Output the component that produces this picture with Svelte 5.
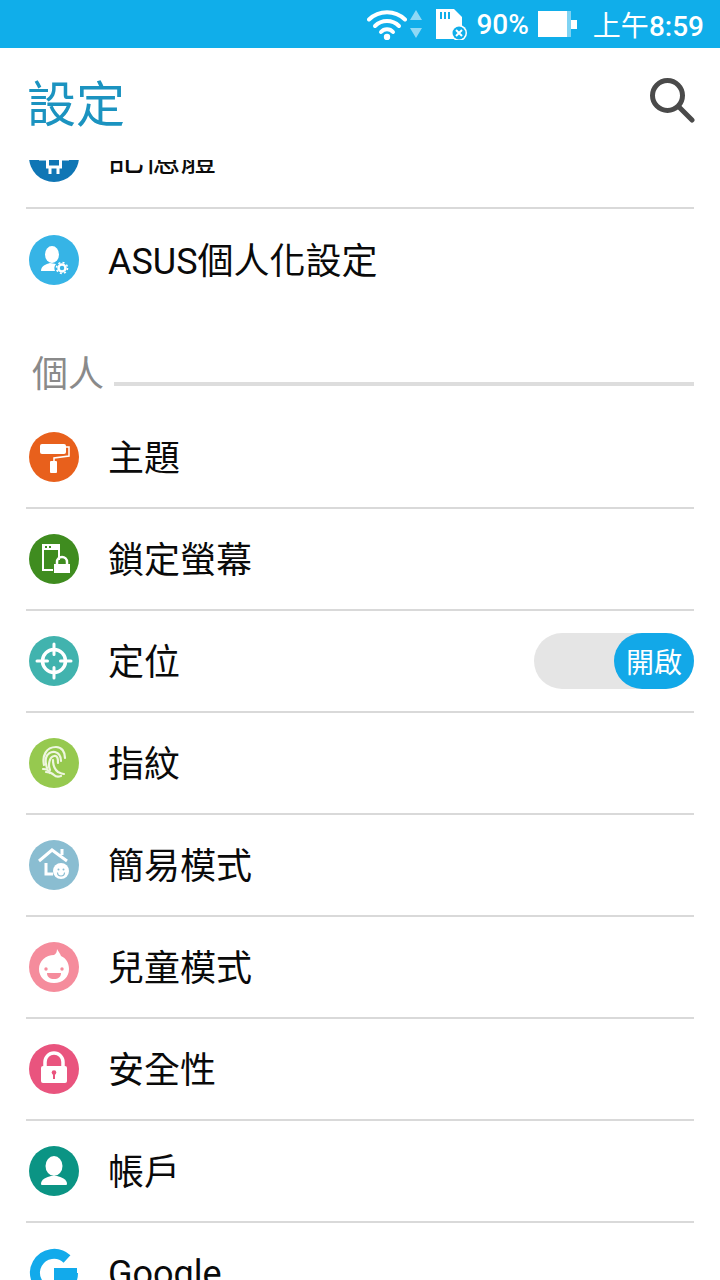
<script>
	const before = [
		{ id: 'storage', color: '#0f76b5', label: '記憶體' },
		{ id: 'asus', color: '#36b4e6', label: 'ASUS個人化設定', last: true }
	];
	const personal = [
		{ id: 'theme', color: '#e8601c', label: '主題' },
		{ id: 'lock', color: '#3f8c1f', label: '鎖定螢幕' },
		{ id: 'location', color: '#41b3ae', label: '定位', toggle: true },
		{ id: 'finger', color: '#96c94f', label: '指紋' },
		{ id: 'easy', color: '#8abdd1', label: '簡易模式' },
		{ id: 'kids', color: '#f58c9c', label: '兒童模式' },
		{ id: 'security', color: '#e9547e', label: '安全性' },
		{ id: 'account', color: '#0b9484', label: '帳戶' },
		{ id: 'google', color: 'none', label: 'Google', latin: true }
	];
</script>

{#snippet icon(id, color)}
	<svg class="icon" viewBox="0 0 50 50" width="50" height="50">
		{#if id === 'google'}
			<path d="M38 11A19 19 0 1 0 44 25" fill="none" stroke="#12aaeb" stroke-width="10" />
			<path d="M25 20h23v14H25z" fill="#12aaeb" />
		{:else}
			<circle cx="25" cy="25" r="25" fill={color} />
		{/if}
		{#if id === 'storage'}
			<path d="M18.500 22v13h13V22" fill="none" stroke="#fff" stroke-width="3" />
			<path d="M10 27h8M32 27h8" stroke="#fff" stroke-width="3" />
			<path d="M21 36v6M29 36v6" stroke="#fff" stroke-width="3" />
		{:else if id === 'asus'}
			<ellipse cx="23" cy="19.500" rx="7" ry="8.500" fill="#fff" />
			<path d="M12 36c0-5 5-7 9-8l6 1c-2 2-2 5-1 7z" fill="#fff" />
			<circle cx="33" cy="33" r="3.500" fill="none" stroke="#fff" stroke-width="2.500" />
			<circle cx="33" cy="33" r="5.500" fill="none" stroke="#fff" stroke-width="1.600" stroke-dasharray="2 2.300" />
		{:else if id === 'theme'}
			<rect x="11" y="12" width="26" height="10" rx="2" fill="#fff" />
			<path d="M37 15h3v9l-15 2v4" fill="none" stroke="#fff" stroke-width="1.500" />
			<rect x="21" y="29" width="7" height="12" rx="1" fill="#fff" />
		{:else if id === 'lock'}
			<path d="M13 10h18v6H13z" fill="#fff" />
			<path d="M14 16v20h10M30 16v10" fill="none" stroke="#fff" stroke-width="2" />
			<path d="M16 12h2v2h-2zM20 12h2v2h-2z" fill={color} />
			<rect x="25" y="30" width="16" height="9" fill="#fff" />
			<path d="M28 30v-2a5 5 0 0 1 10 0v2" fill="none" stroke="#fff" stroke-width="2.500" />
		{:else if id === 'location'}
			<circle cx="25" cy="25" r="11.500" fill="none" stroke="#fff" stroke-width="3.500" />
			<path d="M25 8v10.500M25 31.500V42M8 25h10.500M31.500 25H42" stroke="#fff" stroke-width="3" stroke-linecap="round" />
		{:else if id === 'finger'}
			<g fill="none" stroke="#eef6e0" stroke-width="2.200" stroke-linecap="round">
				<path d="M15 27c-2-9 2-18 12-18 6 0 9 5 9 11" />
				<path d="M18 30c-1-3-2-6-1-10 1-4 5-7 9-6 4 1 6 5 6 9" />
				<path d="M21 32c-2-4-1-13 4-14 4-1 4 4 4 7" />
				<path d="M24 22c0 4 1 9 5 12 2 1 4 2 6 2" />
				<path d="M17 34c4 0 6 1 8 3s4 2 7 1" />
				<path d="M14 31c3 0 6 1 7 4" />
			</g>
		{:else if id === 'easy'}
			<path d="M10 21L23 10l15 11M33 15V9" fill="none" stroke="#fff" stroke-width="3" />
			<path d="M17 23v11h7" fill="none" stroke="#fff" stroke-width="3" />
			<circle cx="32" cy="31" r="8" fill="#fff" />
			<circle cx="29.500" cy="29.500" r="1" fill={color} />
			<circle cx="34.500" cy="29.500" r="1" fill={color} />
			<path d="M28.500 32.500a3.500 3.500 0 0 0 7 0" fill="none" stroke={color} stroke-width="1.200" />
		{:else if id === 'kids'}
			<path d="M25 13c2-1 3-3 3-6 1 2 3 4 4 7 5 2 8 7 8 13 0 8-6 14-15 14S10 35 10 27c0-8 7-14 15-14z" fill="#fff" />
			<circle cx="17" cy="27" r="1.700" fill={color} />
			<circle cx="33" cy="27" r="1.700" fill={color} />
			<path d="M18 31h14c0 4-3 6-7 6s-7-2-7-6z" fill={color} />
		{:else if id === 'security'}
			<path d="M16 24v-6a9 9 0 0 1 18 0v6" fill="none" stroke="#fff" stroke-width="3.500" />
			<rect x="12" y="22" width="26" height="17" rx="2" fill="#fff" />
			<circle cx="25" cy="28.500" r="2.300" fill={color} />
			<path d="M24 29h2v6h-2z" fill={color} />
		{:else if id === 'account'}
			<ellipse cx="25" cy="20" rx="8.500" ry="10" fill="#fff" />
			<path d="M12 38c0-5 6-7 10-8h6c4 1 10 3 10 8a1 1 0 0 1-1 1H13a1 1 0 0 1-1-1z" fill="#fff" />
		{/if}
	</svg>
{/snippet}

{#snippet row(item)}
	<div class="row" class:last={item.last} class:latin={item.latin}>
		{@render icon(item.id, item.color)}
		<span class="label">{item.label}</span>
		{#if item.toggle}
			<div class="toggle"><span class="knob">開啟</span></div>
		{/if}
	</div>
{/snippet}

<div class="page">
	<div class="status">
		<svg class="wifi" viewBox="0 0 40 32" width="40" height="32">
			<g fill="none" stroke="#fff" stroke-width="4" stroke-linecap="round">
				<path d="M2 11.500a26 26 0 0 1 36 0" />
				<path d="M8 18a17 17 0 0 1 24 0" />
				<path d="M14 24a8 8 0 0 1 12 0" />
			</g>
			<circle cx="20" cy="29" r="3.200" fill="#fff" />
		</svg>
		<svg class="arrows" viewBox="0 0 12 28" width="12" height="28">
			<path d="M6 0l6 10H0zM6 28l6-10H0z" fill="#8fd8f5" />
		</svg>
		<svg class="sd" viewBox="0 0 32 32" width="32" height="32">
			<path d="M1 1h18l8 8v22H1z" fill="#fff" />
			<path d="M5 4h2v7H5zM9 4h2v7H9zM13 4h2v7h-2z" fill="#10aeea" />
			<circle cx="24" cy="25" r="8" fill="#fff" />
			<circle cx="24" cy="25" r="6.500" fill="#10aeea" />
			<path d="M21 22l6 6M27 22l-6 6" stroke="#fff" stroke-width="2" />
		</svg>
		<span class="pct">90%</span>
		<svg class="battery" viewBox="0 0 39 26" width="39" height="26">
			<path d="M0 0h29v26H0z" fill="#fff" />
			<path d="M29 0h4v26h-4z" fill="#7fd3f3" />
			<path d="M33 9h6v9h-6z" fill="#fff" />
		</svg>
		<span class="clock">上午<span class="digits">8:59</span></span>
	</div>

	<div class="appbar">
		<h1>設定</h1>
		<svg viewBox="0 0 46 46" width="46" height="46">
			<circle cx="18.500" cy="18.500" r="15" fill="none" stroke="#4a4a4a" stroke-width="5" />
			<path d="M30 30l13 13" stroke="#4a4a4a" stroke-width="5" stroke-linecap="round" />
		</svg>
	</div>

	<div class="scroller">
		<div class="list">
			{#each before as item}
				{@render row(item)}
			{/each}
			<div class="section">
				<span>個人</span>
				<div class="rule"></div>
			</div>
			{#each personal as item}
				{@render row(item)}
			{/each}
		</div>
	</div>
</div>

<style>
	:global(body) {
		background: #fff;
	}

	.page {
		display: flex;
		flex-direction: column;
		height: 1280px;
		overflow: hidden;
		background: #fff;
		font-family: Roboto, "Noto Sans CJK TC", sans-serif;
	}

	.status {
		display: flex;
		align-items: center;
		justify-content: flex-end;
		flex: none;
		height: 48px;
		padding-right: 16px;
		background: #10aeea;
		color: #fff;
	}

	.arrows {
		margin-left: 3px;
	}

	.sd {
		margin-left: 13px;
	}

	.pct {
		margin-left: 9px;
		font-size: 28px;
		font-weight: 500;
	}

	.battery {
		margin-left: 9px;
	}

	.clock {
		margin-left: 16px;
		font-size: 28px;
	}

	.digits {
		font-weight: 500;
	}

	.appbar {
		display: flex;
		align-items: center;
		justify-content: space-between;
		flex: none;
		box-sizing: border-box;
		height: 112px;
		padding: 0 25px 8px 27px;
	}

	h1 {
		margin: 0;
		font-size: 49px;
		font-weight: 400;
		color: #1b93c0;
	}

	.scroller {
		flex: 1;
		overflow: hidden;
	}

	.list {
		margin-top: -53px;
		padding: 0 26px;
	}

	.row {
		display: flex;
		align-items: center;
		box-sizing: border-box;
		height: 102px;
		padding-left: 3px;
		border-bottom: 2px solid #d9d9d9;
	}

	.row.last {
		border-bottom: 0;
	}

	.icon {
		flex: none;
	}

	.label {
		margin-left: 29px;
		padding-bottom: 4px;
		font-size: 36px;
		color: #0a0a0a;
	}

	.row.latin .label {
		padding: 2px 0 0;
	}

	.toggle {
		display: flex;
		justify-content: flex-end;
		width: 160px;
		height: 56px;
		margin-left: auto;
		border-radius: 28px;
		background: #e5e5e5;
	}

	.knob {
		display: flex;
		align-items: center;
		justify-content: center;
		width: 80px;
		border-radius: 28px;
		background: #12a8e8;
		color: #fff;
		font-size: 28px;
	}

	.section {
		display: flex;
		align-items: center;
		box-sizing: border-box;
		height: 96px;
		padding: 24px 0 0 6px;
		color: #8a8a8a;
		font-size: 36px;
	}

	.rule {
		flex: 1;
		height: 4px;
		margin: 26px 0 0 10px;
		background: #ddd;
	}
</style>
